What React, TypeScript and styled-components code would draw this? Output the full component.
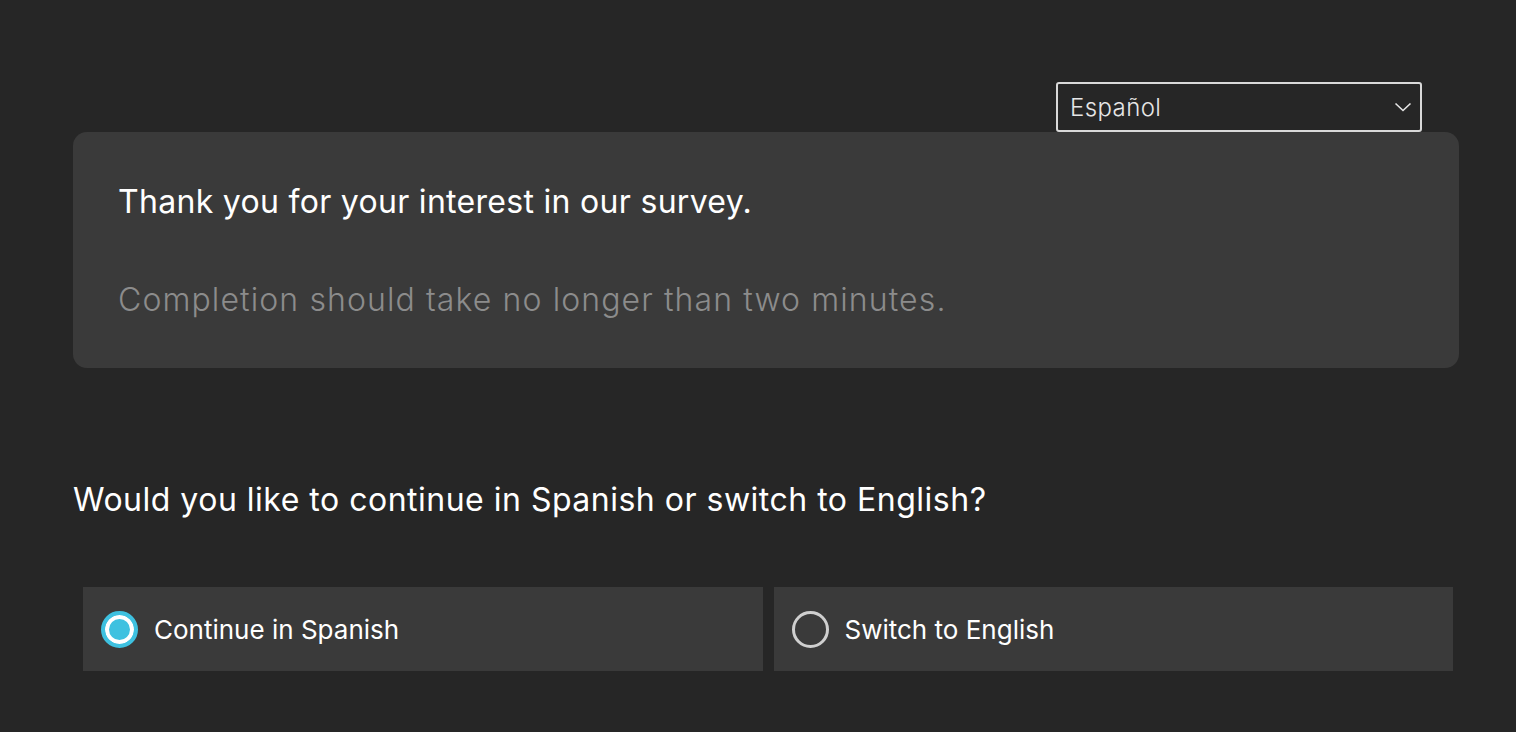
import React, { useState } from 'react'
import styled, { createGlobalStyle } from 'styled-components'

const GlobalStyle = createGlobalStyle`
  html, body {
    margin: 0;
    padding: 0;
    background: #262626;
  }
  body {
    font-family: Inter, "Open Sans", "Liberation Sans", sans-serif;
    color: #ffffff;
  }
`

const options = [
  { id: 'es', label: 'Continue in Spanish' },
  { id: 'en', label: 'Switch to English' },
]

export default function App() {
  const [choice, setChoice] = useState('es')

  return (
    <>
      <GlobalStyle />
      <Page>
        <TopBar>
          <LangSelect>
            <span>Español</span>
            <svg width="18" height="12" viewBox="0 0 18 12" fill="none">
              <path d="M1.5 2.5 L9 9.5 L16.5 2.5" stroke="#e6e6e6" strokeWidth="1.6" />
            </svg>
          </LangSelect>
        </TopBar>
        <Intro>
          <Title>Thank you for your interest in our survey.</Title>
          <Subtitle>Completion should take no longer than two minutes.</Subtitle>
        </Intro>
        <Question>Would you like to continue in Spanish or switch to English?</Question>
        <Options>
          {options.map((o) => (
            <Option key={o.id} onClick={() => setChoice(o.id)}>
              <Radio $checked={choice === o.id} />
              <OptionLabel>{o.label}</OptionLabel>
            </Option>
          ))}
        </Options>
      </Page>
    </>
  )
}

const Page = styled.div`
  padding: 82px 57px 0 73px;
`

const TopBar = styled.div`
  display: flex;
  justify-content: flex-end;
  padding-right: 37px;
`

const LangSelect = styled.div`
  box-sizing: border-box;
  width: 366px;
  height: 50px;
  display: flex;
  align-items: center;
  justify-content: space-between;
  padding: 0 8px 0 12px;
  border: 2px solid #d9d9d9;
  border-radius: 3px;
  font-size: 24px;
  font-weight: 300;
  letter-spacing: 0.4px;
  color: #e6e6e6;
`

const Intro = styled.div`
  box-sizing: border-box;
  height: 236px;
  background: #3a3a3a;
  border-radius: 14px;
  padding: 50px 45px 0;
`

const Title = styled.div`
  font-size: 32px;
  line-height: 40px;
  letter-spacing: 0.3px;
  color: #ffffff;
`

const Subtitle = styled.div`
  margin-top: 58px;
  font-size: 32px;
  line-height: 40px;
  font-weight: 300;
  letter-spacing: 1.1px;
  color: #8c8c8c;
`

const Question = styled.div`
  margin-top: 112px;
  font-size: 32px;
  line-height: 40px;
  letter-spacing: 0.5px;
  color: #ffffff;
`

const Options = styled.div`
  display: grid;
  grid-template-columns: 1fr 1fr;
  gap: 11px;
  margin: 67px 6px 0 10px;
`

const Option = styled.div`
  height: 84px;
  display: flex;
  align-items: center;
  gap: 16px;
  padding-left: 18px;
  background: #3a3a3a;
  cursor: pointer;
`

const Radio = styled.span<{ $checked: boolean }>`
  box-sizing: border-box;
  width: 37px;
  height: 37px;
  border-radius: 50%;
  flex-shrink: 0;
  border: ${(p) => (p.$checked ? '4px solid #3ec1e0' : '3px solid #cfcfcf')};
  background: ${(p) => (p.$checked ? '#3ec1e0' : 'transparent')};
  box-shadow: ${(p) => (p.$checked ? 'inset 0 0 0 4px #ffffff' : 'none')};
`

const OptionLabel = styled.span`
  font-size: 26px;
  color: #ffffff;
`
